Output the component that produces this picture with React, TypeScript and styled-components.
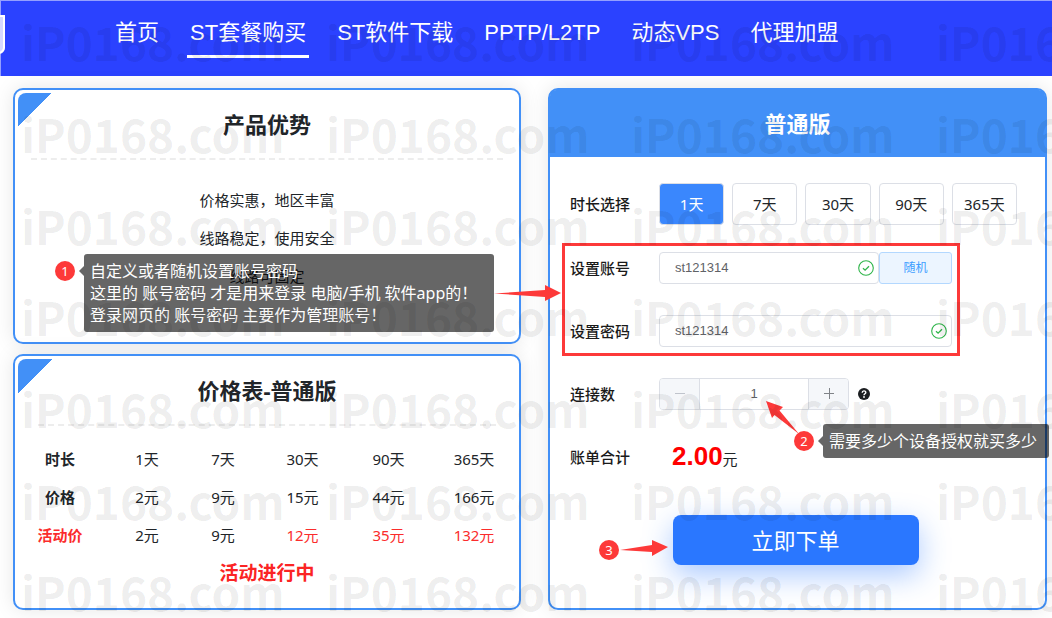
import React, { useState } from "react";
import styled, { createGlobalStyle, css } from "styled-components";

const brand = "#4290f7";
const mark = "#fd3939";
const uiFont = `"Noto Sans", "Noto Sans CJK SC", sans-serif`;
const arialFont = `"Liberation Sans", "Noto Sans CJK SC", sans-serif`;

const GlobalStyle = createGlobalStyle`
  *, *::before, *::after { box-sizing: border-box; }
  body {
    margin: 0;
    background: #fff;
    color: #212529;
    font: 15px/38px ${uiFont};
  }
  button, input { font: inherit; color: inherit; margin: 0; }
  h2, p, ul { margin: 0; padding: 0; }
`;

const Page = styled.div`
  position: relative;
  overflow: hidden;
  padding-bottom: 8px;
`;

const Header = styled.header`
  position: relative;
  display: flex;
  height: 76px;
  padding: 12px 0 0 111px;
  background: #2b42ff;
  border-top: 1px solid #949fff;
  border-left: 1px solid #949fff;
`;

const LogoEdge = styled.svg`
  position: absolute;
  left: -1px;
  top: 14px;
`;

const Nav = styled.nav`
  display: flex;
  align-items: flex-start;
  gap: 25px;
`;

const NavLink = styled.a<{ $active?: boolean }>`
  padding: 0 3px;
  height: 45px;
  color: #fff;
  font: 22px/40px ${arialFont};
  text-decoration: none;
  white-space: nowrap;
  border-bottom: 3px solid ${(p) => (p.$active ? "#fff" : "transparent")};
`;

const Main = styled.main`
  display: grid;
  grid-template-columns: 508fr 499fr;
  gap: 27px;
  padding: 12px 5px 0 13px;
`;

const Column = styled.div`
  display: flex;
  flex-direction: column;
  gap: 10px;
`;

const Card = styled.section`
  position: relative;
  flex: 1;
  border: 2px solid ${brand};
  border-radius: 10px;
  background: #fff;
  box-shadow: 0 0 20px rgba(0, 0, 0, 0.1);
  text-align: center;
`;

const Corner = styled.span`
  position: absolute;
  left: 3px;
  top: 3px;
  width: 34px;
  height: 34px;
  border-top-left-radius: 8px;
  background: linear-gradient(135deg, ${brand} 50%, transparent 50%);
`;

const CardTitle = styled.h2<{ $inset: number }>`
  height: 70px;
  margin: 0 ${(p) => p.$inset}px;
  border-bottom: 2px dashed #ededed;
  font-size: 22px;
  line-height: 68px;
  font-weight: 700;
`;

const Benefits = styled.ul`
  padding: 21px 0 47px;
  list-style: none;
`;

const PriceTable = styled.table`
  width: 100%;
  margin-top: 14px;
  border-collapse: collapse;
  table-layout: fixed;

  th, td { height: 38px; padding: 0; }
`;

const Cell = styled.td<{ $sale?: boolean }>`
  color: ${(p) => (p.$sale ? "#fb2c2c" : "inherit")};
`;

const HeadCell = styled.th<{ $sale?: boolean }>`
  font-weight: 700;
  color: ${(p) => (p.$sale ? "#fb2c2c" : "inherit")};
`;

const Promo = styled.p`
  padding-bottom: 14px;
  color: #fb2424;
  font-size: 19px;
  font-weight: 700;
`;

const OrderCard = styled.section`
  display: flex;
  flex-direction: column;
  border: 2px solid ${brand};
  border-radius: 10px;
  background: #fff;
  box-shadow: 0 0 20px rgba(0, 0, 0, 0.1);
`;

const OrderTitle = styled.h2`
  height: 67px;
  border-radius: 6px 6px 0 0;
  background: ${brand};
  color: #fff;
  font-size: 22px;
  line-height: 66px;
  font-weight: 700;
  text-align: center;
`;

const Form = styled.form`
  display: flex;
  flex-direction: column;
  gap: 23px;
  padding: 26px 24px 0 20px;
`;

const Row = styled.div`
  display: grid;
  grid-template-columns: 89px 1fr;
  align-items: center;
  min-height: 40px;
  line-height: 32px;
`;

const RowLabel = styled.label`
  font-weight: 500;
  color: #1a1a1a;
`;

const Durations = styled.div`
  display: flex;
  gap: 8px;
  margin-right: 4px;
`;

const DurationButton = styled.button<{ $active: boolean }>`
  flex: 1;
  height: 42px;
  padding: 0;
  border: 1px solid #dcdfe6;
  border-radius: 4px;
  background: ${(p) => (p.$active ? "#3a87fd" : "#fff")};
  color: ${(p) => (p.$active ? "#fff" : "inherit")};
`;

const Field = styled.div`
  display: flex;
  margin-right: 69px;
`;

const InputBox = styled.div`
  display: flex;
  flex: 1;
  align-items: center;
  min-width: 0;
  height: 32px;
  padding: 0 4px 0 15px;
  border: 1px solid #dcdfe6;
  border-radius: 4px;
  background: #fff;
`;

const TextInput = styled.input`
  flex: 1;
  min-width: 0;
  height: 28px;
  padding: 0;
  border: 0;
  outline: 0;
  background: transparent;
  color: #606266;
  font: 13px/28px ${arialFont};
`;

const RandomButton = styled.button`
  width: 73px;
  height: 32px;
  padding: 0;
  border: 1px solid #b3d8ff;
  border-radius: 3px;
  background: #ecf5ff;
  color: #409eff;
  font-size: 12px;
  line-height: 30px;
`;

const StepperRow = styled.div`
  display: flex;
  align-items: center;
  gap: 9px;
`;

const Stepper = styled.div`
  display: flex;
  width: 190px;
  height: 32px;
  overflow: hidden;
  border: 1px solid #dcdfe6;
  border-radius: 4px;
`;

const stepSide = css<{ $side: "left" | "right" }>`
  border: 0 solid #dcdfe6;
  ${(p) => (p.$side === "left" ? "border-right-width: 1px;" : "border-left-width: 1px;")}
`;

const StepButton = styled.button<{ $side: "left" | "right" }>`
  display: flex;
  align-items: center;
  justify-content: center;
  width: 40px;
  padding: 0;
  background: #f5f7fa;
  color: #808388;
  ${stepSide}

  &:disabled { color: #c0c4cc; }
`;

const CountInput = styled.input`
  flex: 1;
  min-width: 0;
  padding: 0;
  border: 0;
  outline: 0;
  color: #606266;
  font: 13px/30px ${arialFont};
  text-align: center;
`;

const Total = styled.div`
  padding-left: 13px;
`;

const Amount = styled.strong`
  color: #f00;
  font: 700 26px/32px ${arialFont};
`;

const OrderButton = styled.button`
  align-self: center;
  width: 246px;
  height: 50px;
  margin: 15px 0 43px;
  padding: 0;
  border: 0;
  border-radius: 8px;
  background: #2a77ff;
  box-shadow: 0 10px 30px rgba(42, 119, 255, 0.4);
  color: #fff;
  font-size: 22px;
  line-height: 50px;
`;

const Highlight = styled.div`
  position: absolute;
  left: 562px;
  top: 243px;
  width: 398px;
  height: 113px;
  border: 3px solid ${mark};
  pointer-events: none;
`;

const Arrows = styled.svg`
  position: absolute;
  left: 0;
  top: 0;
  pointer-events: none;
`;

const Badge = styled.span<{ $x: number; $y: number }>`
  position: absolute;
  left: ${(p) => p.$x}px;
  top: ${(p) => p.$y}px;
  width: 20px;
  height: 20px;
  border-radius: 50%;
  background: ${mark};
  color: #fff;
  font-size: 13px;
  line-height: 20px;
  text-align: center;
`;

const Tip = styled.div<{ $x: number; $y: number; $w: number }>`
  position: absolute;
  left: ${(p) => p.$x}px;
  top: ${(p) => p.$y}px;
  width: ${(p) => p.$w}px;
  padding: 6px;
  border-radius: 3px;
  background: rgba(0, 0, 0, 0.6);
  color: #fff;
  font-size: 16px;
  line-height: 22px;
  white-space: nowrap;

  &::before {
    content: "";
    position: absolute;
    right: 100%;
    top: 12px;
    border: 5px solid transparent;
    border-left-width: 0;
    border-right-color: rgba(0, 0, 0, 0.6);
  }
`;

const Watermarks = styled.div`
  position: absolute;
  inset: 8px 0 0 21px;
  display: grid;
  grid-template-columns: repeat(4, 305px);
  grid-auto-rows: 92px 92px 91px;
  overflow: hidden;
  pointer-events: none;
  color: rgba(0, 0, 0, 0.075);
  font: 700 46px/66px "Noto Sans CJK SC", sans-serif;
`;

const navItems = ["首页", "ST套餐购买", "ST软件下载", "PPTP/L2TP", "动态VPS", "代理加盟"];
const benefits = ["价格实惠，地区丰富", "线路稳定，使用安全", "线路可固定"];
const durations = ["1天", "7天", "30天", "90天", "365天"];
const prices = ["2元", "9元", "15元", "44元", "166元"];
const salePrices = ["2元", "9元", "12元", "35元", "132元"];
const columnShares = [90, 84, 68, 91, 81, 90];

const CheckMark = () => (
  <svg width="16" height="16" viewBox="0 0 16 16" fill="none" stroke="#2fb54a" aria-hidden="true">
    <circle cx="8" cy="8" r="7.3" strokeWidth="1.1" />
    <path d="M5 8.2 7.1 10.2 11 6.2" strokeWidth="1.3" />
  </svg>
);

const StepIcon = ({ plus }: { plus?: boolean }) => (
  <svg width="12" height="12" viewBox="0 0 12 12" stroke="currentColor" aria-hidden="true">
    <path d={plus ? "M1 5.5h10M6.5 0v11" : "M1 5.5h10"} />
  </svg>
);

const HelpIcon = () => (
  <svg width="12" height="12" viewBox="0 0 12 12" role="img" aria-label="帮助">
    <circle cx="6" cy="6" r="6" fill="#1b1e21" />
    <path d="M4.2 4.7C4.2 2.3 7.8 2.4 7.8 4.5 7.8 5.8 6 5.8 6 7.2" fill="none" stroke="#fff" strokeWidth="1.4" />
    <circle cx="6" cy="9" r="0.9" fill="#fff" />
  </svg>
);

export default function App() {
  const [days, setDays] = useState(0);
  const [count, setCount] = useState(1);
  const [account, setAccount] = useState("st121314");
  const [password, setPassword] = useState("st121314");

  return (
    <Page>
      <GlobalStyle />
      <Header>
        <LogoEdge width="6" height="40" viewBox="0 0 6 40" aria-hidden="true">
          <path d="M0 1H4V33Q4 36 0 38Z" fill="#d5d9ff" />
          <path d="M0 1H4V33Q4 36 0 38" fill="none" stroke="#fff" strokeWidth="2" />
        </LogoEdge>
        <Nav>
          {navItems.map((item, i) => (
            <NavLink key={item} href="#" $active={i === 1}>{item}</NavLink>
          ))}
        </Nav>
      </Header>

      <Main>
        <Column>
          <Card>
            <Corner />
            <CardTitle $inset={16}>产品优势</CardTitle>
            <Benefits>
              {benefits.map((text) => <li key={text}>{text}</li>)}
            </Benefits>
          </Card>
          <Card>
            <Corner />
            <CardTitle $inset={23}>价格表-普通版</CardTitle>
            <PriceTable>
              <colgroup>
                {columnShares.map((share, i) => (
                  <col key={i} style={{ width: `${(share / 504) * 100}%` }} />
                ))}
              </colgroup>
              <tbody>
                <tr>
                  <HeadCell scope="row">时长</HeadCell>
                  {durations.map((d) => <Cell key={d}>{d}</Cell>)}
                </tr>
                <tr>
                  <HeadCell scope="row">价格</HeadCell>
                  {prices.map((p) => <Cell key={p}>{p}</Cell>)}
                </tr>
                <tr>
                  <HeadCell scope="row" $sale>活动价</HeadCell>
                  {salePrices.map((p, i) => <Cell key={p} $sale={i > 1}>{p}</Cell>)}
                </tr>
              </tbody>
            </PriceTable>
            <Promo>活动进行中</Promo>
          </Card>
        </Column>

        <OrderCard>
          <OrderTitle>普通版</OrderTitle>
          <Form onSubmit={(e) => e.preventDefault()}>
            <Row>
              <RowLabel as="span" id="duration-label">时长选择</RowLabel>
              <Durations role="group" aria-labelledby="duration-label">
                {durations.map((d, i) => (
                  <DurationButton key={d} type="button" $active={i === days} onClick={() => setDays(i)}>
                    {d}
                  </DurationButton>
                ))}
              </Durations>
            </Row>
            <Row>
              <RowLabel htmlFor="account">设置账号</RowLabel>
              <Field>
                <InputBox>
                  <TextInput id="account" value={account} onChange={(e) => setAccount(e.target.value)} />
                  <CheckMark />
                </InputBox>
                <RandomButton type="button">随机</RandomButton>
              </Field>
            </Row>
            <Row>
              <RowLabel htmlFor="password">设置密码</RowLabel>
              <Field>
                <InputBox>
                  <TextInput id="password" value={password} onChange={(e) => setPassword(e.target.value)} />
                  <CheckMark />
                </InputBox>
              </Field>
            </Row>
            <Row>
              <RowLabel htmlFor="count">连接数</RowLabel>
              <StepperRow>
                <Stepper>
                  <StepButton type="button" $side="left" aria-label="减少" disabled={count <= 1} onClick={() => setCount(count - 1)}>
                    <StepIcon />
                  </StepButton>
                  <CountInput id="count" value={count} onChange={(e) => setCount(Number(e.target.value) || 1)} />
                  <StepButton type="button" $side="right" aria-label="增加" onClick={() => setCount(count + 1)}>
                    <StepIcon plus />
                  </StepButton>
                </Stepper>
                <HelpIcon />
              </StepperRow>
            </Row>
            <Row>
              <RowLabel as="span">账单合计</RowLabel>
              <Total><Amount>2.00</Amount>元</Total>
            </Row>
            <OrderButton type="submit">立即下单</OrderButton>
          </Form>
        </OrderCard>
      </Main>

      <Highlight />
      <Arrows width="1052" height="618" viewBox="0 0 1052 618" fill={mark} aria-hidden="true">
        <path d="M494 293.5 545 290V285L561 293 545 301V297Z" />
        <path d="M766 401 783 407 779.5 410.5 799 434 774.5 415 772 418Z" />
        <path d="M620 550 652 545V540L668 547 652 556V552Z" />
      </Arrows>
      <Badge $x={55} $y={261}>1</Badge>
      <Badge $x={794} $y={431}>2</Badge>
      <Badge $x={599} $y={540}>3</Badge>
      <Tip $x={84} $y={254} $w={410}>
        <p>自定义或者随机设置账号密码</p>
        <p>这里的 账号密码 才是用来登录 电脑/手机 软件app的！</p>
        <p>登录网页的 账号密码 主要作为管理账号！</p>
      </Tip>
      <Tip $x={823} $y={424} $w={226}>需要多少个设备授权就买多少</Tip>

      <Watermarks aria-hidden="true">
        {Array.from({ length: 28 }, (_, i) => <span key={i}>iP0168.com</span>)}
      </Watermarks>
    </Page>
  );
}
